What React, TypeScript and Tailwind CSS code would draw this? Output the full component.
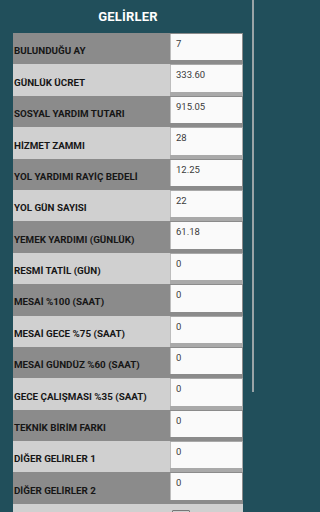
const rows = [
  { label: "BULUNDUĞU AY", value: "7" },
  { label: "GÜNLÜK ÜCRET", value: "333.60" },
  { label: "SOSYAL YARDIM TUTARI", value: "915.05" },
  { label: "HİZMET ZAMMI", value: "28" },
  { label: "YOL YARDIMI RAYİÇ BEDELİ", value: "12.25" },
  { label: "YOL GÜN SAYISI", value: "22" },
  { label: "YEMEK YARDIMI (GÜNLÜK)", value: "61.18" },
  { label: "RESMİ TATİL (GÜN)", value: "0" },
  { label: "MESAİ %100 (SAAT)", value: "0" },
  { label: "MESAİ GECE %75 (SAAT)", value: "0" },
  { label: "MESAİ GÜNDÜZ %60 (SAAT)", value: "0" },
  { label: "GECE ÇALIŞMASI %35 (SAAT)", value: "0" },
  { label: "TEKNİK BİRİM FARKI", value: "0" },
  { label: "DİĞER GELİRLER 1", value: "0" },
  { label: "DİĞER GELİRLER 2", value: "0" },
];

export default function App() {
  return (
    <div className="w-full min-h-screen bg-[#214f5b]">
      <div
        className="relative w-[256px] h-[512px] overflow-hidden"
        style={{ fontFamily: "Roboto, 'Liberation Sans', sans-serif" }}
      >
        {/* Title */}
        <div className="h-[33px] flex items-center justify-center pt-[1px]">
          <span className="text-white font-bold text-[13px] tracking-[0.2px]">GELİRLER</span>
        </div>

        {/* Form rows */}
        <div className="ml-[13px] w-[230px] flex flex-col">
          {rows.map((row, i) => (
            <div
              key={row.label}
              className={`h-[31.4px] flex shrink-0 ${i % 2 === 0 ? "bg-[#8b8b8b]" : "bg-[#d0d0d0]"}`}
            >
              <div className="flex-1 flex items-center pl-[1px] pt-[6px]">
                <span className="text-[9.8px] font-bold text-[#161616] whitespace-nowrap">{row.label}</span>
              </div>
              <div
                className={`w-[73px] pt-[1px] pr-[1.5px] pb-[4px] ${i % 2 === 0 ? "" : "bg-[#a9a9a9]"}`}
              >
                <div className="h-full bg-[#fafafa] border-l border-[#bdbdbd] pl-[5px] pt-[3px] text-[9.5px] text-[#3a3a3a]">
                  {row.value}
                </div>
              </div>
            </div>
          ))}
          <div className="h-[31.4px] flex shrink-0 bg-[#d0d0d0]">
            <div className="flex-1" />
            <div className="w-[73px] pt-[6px] pl-[2px]">
              <div className="w-[18px] h-[14px] border border-[#777] rounded-[1px]" />
            </div>
          </div>
        </div>

        {/* Scrollbar */}
        <div className="absolute right-[2px] top-0 w-[2px] h-[392px] bg-[#9aa4a7]" />
      </div>
    </div>
  );
}
